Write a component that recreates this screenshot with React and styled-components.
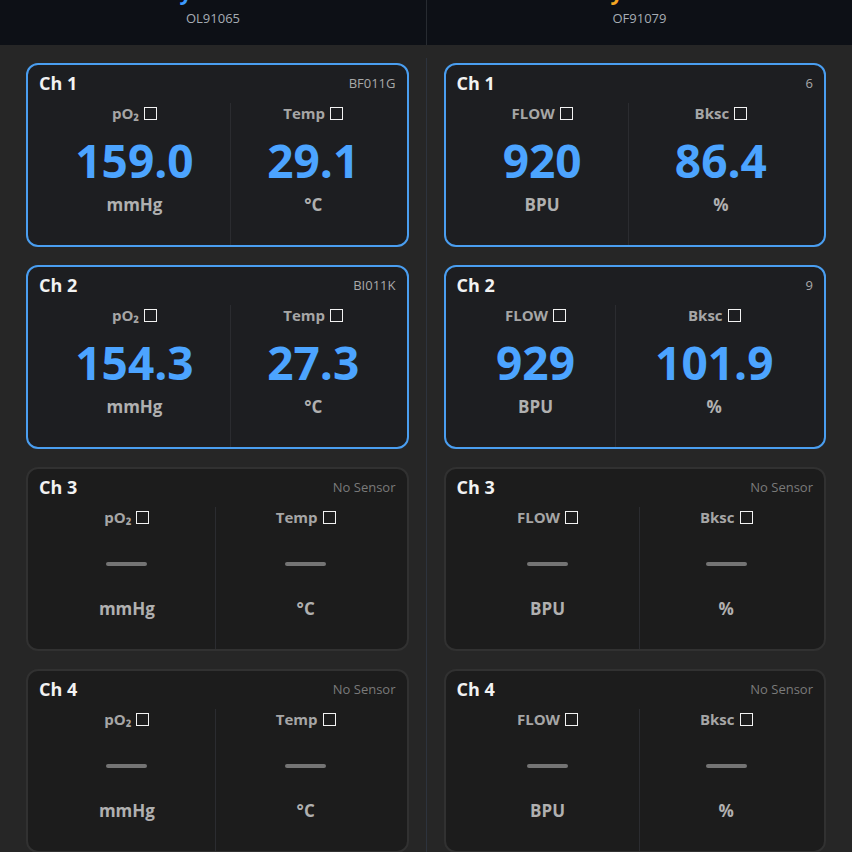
import React from "react";
import styled, { createGlobalStyle } from "styled-components";

const devices = [
  {
    name: "OxyLite Pro",
    serial: "OL91065",
    accent: "#3d9bff",
    left: "pO₂",
    right: "Temp",
    leftUnit: "mmHg",
    rightUnit: "°C",
    channels: [
      { tag: "BF011G", a: "159.0", b: "29.1" },
      { tag: "BI011K", a: "154.3", b: "27.3" },
      { tag: null },
      { tag: null },
    ],
  },
  {
    name: "OxyFlo Pro",
    serial: "OF91079",
    accent: "#f5a623",
    left: "FLOW",
    right: "Bksc",
    leftUnit: "BPU",
    rightUnit: "%",
    channels: [
      { tag: "6", a: "920", b: "86.4" },
      { tag: "9", a: "929", b: "101.9" },
      { tag: null },
      { tag: null },
    ],
  },
];

const Reading = ({ label, value, unit, divided }) => (
  <ReadingColumn $divided={divided}>
    <ReadingLabel>
      {label}
      <CheckBox />
    </ReadingLabel>
    {value ? (
      <ReadingValue>{value}</ReadingValue>
    ) : (
      <EmptyValue>
        <Dash />
      </EmptyValue>
    )}
    <ReadingUnit>{unit}</ReadingUnit>
  </ReadingColumn>
);

const ChannelCard = ({ index, channel, device }) => {
  const active = channel.tag !== null;
  return (
    <Card $active={active}>
      <CardHead>
        <ChannelName>Ch {index + 1}</ChannelName>
        <SensorTag $active={active}>{active ? channel.tag : "No Sensor"}</SensorTag>
      </CardHead>
      <Readings>
        <Reading label={device.left} value={channel.a} unit={device.leftUnit} />
        <Reading label={device.right} value={channel.b} unit={device.rightUnit} divided />
      </Readings>
    </Card>
  );
};

const App = () => {
  return (
    <Page>
      <GlobalStyle />
      <Header>
        {devices.map((d, i) => (
          <HeaderCell key={d.serial} $divided={i > 0}>
            <DeviceName $accent={d.accent}>{d.name}</DeviceName>
            <Serial>{d.serial}</Serial>
          </HeaderCell>
        ))}
      </Header>
      <Body>
        <Column>
          {devices[0].channels.map((c, i) => (
            <ChannelCard key={i} index={i} channel={c} device={devices[0]} />
          ))}
        </Column>
        <Divider />
        <Column>
          {devices[1].channels.map((c, i) => (
            <ChannelCard key={i} index={i} channel={c} device={devices[1]} />
          ))}
        </Column>
      </Body>
    </Page>
  );
};

const GlobalStyle = createGlobalStyle`
  body {
    margin: 0;
    background: #262626;
    font-family: "Open Sans", "Noto Sans", sans-serif;
  }
`;

const Page = styled.div`
  min-height: 100vh;
  background: #262626;
`;

const Header = styled.div`
  display: grid;
  grid-template-columns: 1fr 1fr;
  height: 45px;
  background: #0d1016;
  overflow: hidden;
`;

const HeaderCell = styled.div`
  display: flex;
  flex-direction: column;
  align-items: center;
  border-left: ${p => (p.$divided ? "1px solid #272b31" : "none")};
`;

const DeviceName = styled.div`
  margin-top: -20px;
  font-size: 22px;
  line-height: 22px;
  font-weight: 700;
  color: ${p => p.$accent};
`;

const Serial = styled.div`
  margin-top: 7px;
  font-size: 13px;
  line-height: 18px;
  color: #a7adb4;
`;

const Body = styled.div`
  display: grid;
  grid-template-columns: 1fr 1px 1fr;
  column-gap: 17px;
  padding: 0 26px;
`;

const Column = styled.div`
  display: flex;
  flex-direction: column;
  gap: 18px;
  padding: 18px 0;
`;

const Divider = styled.div`
  margin-top: 13px;
  background: #2d333d;
`;

const Card = styled.div`
  box-sizing: border-box;
  height: 184px;
  display: flex;
  flex-direction: column;
  padding: 7px 11px 0 11px;
  border-radius: 12px;
  border: 2px solid ${p => (p.$active ? "#4a9ef0" : "#313131")};
  background: ${p => (p.$active ? "#1d1e21" : "#1c1c1c")};
`;

const CardHead = styled.div`
  display: flex;
  justify-content: space-between;
  align-items: center;
  height: 22px;
`;

const ChannelName = styled.div`
  font-size: 18px;
  font-weight: 700;
  color: #f2f2f2;
`;

const SensorTag = styled.div`
  font-size: 13px;
  color: ${p => (p.$active ? "#a9a9a9" : "#7a7a7a")};
`;

const Readings = styled.div`
  flex: 1;
  display: flex;
  margin-top: 9px;
`;

const ReadingColumn = styled.div`
  flex: 1 1 auto;
  display: flex;
  flex-direction: column;
  align-items: center;
  border-left: ${p => (p.$divided ? "1px solid #2b2c30" : "none")};
`;

const ReadingLabel = styled.div`
  display: flex;
  align-items: center;
  gap: 5px;
  height: 20px;
  font-size: 15px;
  font-weight: 700;
  color: #a6a6a6;
`;

const CheckBox = styled.span`
  box-sizing: border-box;
  width: 13px;
  height: 13px;
  border: 1.5px solid #f2f2f2;
`;

const ReadingValue = styled.div`
  margin-top: 9px;
  font-size: 46px;
  line-height: 56px;
  font-weight: 700;
  color: #4ca4ff;
`;

const EmptyValue = styled.div`
  margin-top: 9px;
  height: 56px;
  display: flex;
  align-items: center;
  justify-content: center;
`;

const Dash = styled.div`
  width: 41px;
  height: 4px;
  border-radius: 2px;
  background: #747474;
`;

const ReadingUnit = styled.div`
  margin-top: 6px;
  font-size: 17px;
  line-height: 22px;
  font-weight: 700;
  color: #b0b0b0;
`;

export default App;
